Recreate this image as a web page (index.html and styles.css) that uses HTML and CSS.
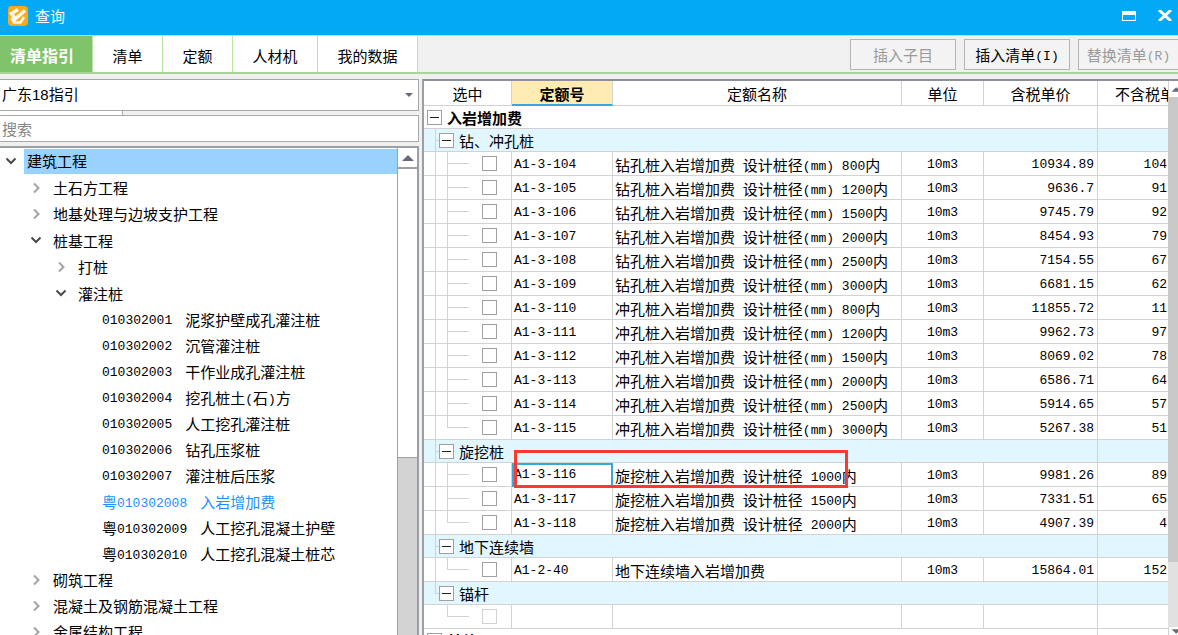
FILE: index.html
```
<!DOCTYPE html>
<html lang="zh-CN">
<head>
<meta charset="utf-8">
<title>查询</title>
<link rel="stylesheet" href="styles.css">
</head>
<body>
<header class="titlebar">
  <svg class="logo" viewBox="0 0 20 20" aria-hidden="true">
    <rect x="0" y="0" width="20" height="20" rx="4" fill="#f9a91c"/>
    <path d="M10 3.500L3.500 7.500L7 13L17 4.500" fill="none" stroke="#fff8ea" stroke-width="3.500"/>
    <path d="M3.500 12L6 16.500H12.500L16 11" fill="none" stroke="#fff8ea" stroke-width="2.500"/>
  </svg>
  <h1 class="title">查询</h1>
  <button class="winbtn" aria-label="最大化"><svg width="14" height="10" viewBox="0 0 14 10"><path d="M0 0H14V10H0Z M1 4V9H13V4Z" fill="#fff" fill-rule="evenodd"/></svg></button>
  <button class="winbtn" aria-label="关闭"><svg width="14" height="11" viewBox="0 0 14 11"><path d="M1 0L13 11M13 0L1 11" stroke="#fff" stroke-width="3"/></svg></button>
</header>

<nav class="toolbar">
  <button class="tab tab-active">清单指引</button>
  <button class="tab">清单</button>
  <button class="tab">定额</button>
  <button class="tab tab-mid">人材机</button>
  <button class="tab tab-wide">我的数据</button>
  <div class="actions">
    <button class="action" disabled>插入子目</button>
    <button class="action">插入清单<span class="m">(I)</span></button>
    <button class="action" disabled>替换清单<span class="m">(R)</span></button>
  </div>
</nav>

<main class="content">
  <section class="sidebar">
    <div class="combo">
      <select class="guide" aria-label="指引"><option>广东18指引</option></select>
      <svg class="combo-arrow" width="8" height="4" viewBox="0 0 8 4"><path d="M0 0H8L4 4Z" fill="#666a7a"/></svg>
    </div>
    <div class="strip"></div>
    <input class="search" type="text" placeholder="搜索" aria-label="搜索">
    <div class="treebox">
      <ul class="tree">
        <li class="node open selected"><svg class="chev" viewBox="0 0 12 12"><path d="M1.500 2.500L6 7L10.500 2.500"/></svg><span class="label">建筑工程</span></li>
        <li class="node l1"><svg class="chev shut" viewBox="0 0 12 12"><path d="M4 1.500L8.500 6L4 10.500"/></svg><span class="label">土石方工程</span></li>
        <li class="node l1"><svg class="chev shut" viewBox="0 0 12 12"><path d="M4 1.500L8.500 6L4 10.500"/></svg><span class="label">地基处理与边坡支护工程</span></li>
        <li class="node l1 open"><svg class="chev" viewBox="0 0 12 12"><path d="M1.500 2.500L6 7L10.500 2.500"/></svg><span class="label">桩基工程</span></li>
        <li class="node l2"><svg class="chev shut" viewBox="0 0 12 12"><path d="M4 1.500L8.500 6L4 10.500"/></svg><span class="label">打桩</span></li>
        <li class="node l2 open"><svg class="chev" viewBox="0 0 12 12"><path d="M1.500 2.500L6 7L10.500 2.500"/></svg><span class="label">灌注桩</span></li>
        <li class="node leaf"><span class="m">010302001</span><span>泥浆护壁成孔灌注桩</span></li>
        <li class="node leaf"><span class="m">010302002</span><span>沉管灌注桩</span></li>
        <li class="node leaf"><span class="m">010302003</span><span>干作业成孔灌注桩</span></li>
        <li class="node leaf"><span class="m">010302004</span><span>挖孔桩土<span class="m">(</span>石<span class="m">)</span>方</span></li>
        <li class="node leaf"><span class="m">010302005</span><span>人工挖孔灌注桩</span></li>
        <li class="node leaf"><span class="m">010302006</span><span>钻孔压浆桩</span></li>
        <li class="node leaf"><span class="m">010302007</span><span>灌注桩后压浆</span></li>
        <li class="node leaf current"><span>粤<span class="m">010302008</span></span><span>入岩增加费</span></li>
        <li class="node leaf"><span>粤<span class="m">010302009</span></span><span>人工挖孔混凝土护壁</span></li>
        <li class="node leaf"><span>粤<span class="m">010302010</span></span><span>人工挖孔混凝土桩芯</span></li>
        <li class="node l1"><svg class="chev shut" viewBox="0 0 12 12"><path d="M4 1.500L8.500 6L4 10.500"/></svg><span class="label">砌筑工程</span></li>
        <li class="node l1"><svg class="chev shut" viewBox="0 0 12 12"><path d="M4 1.500L8.500 6L4 10.500"/></svg><span class="label">混凝土及钢筋混凝土工程</span></li>
        <li class="node l1"><svg class="chev shut" viewBox="0 0 12 12"><path d="M4 1.500L8.500 6L4 10.500"/></svg><span class="label">金属结构工程</span></li>
      </ul>
      <div class="scroll">
        <div class="scroll-up"><svg width="12" height="6" viewBox="0 0 12 6"><path d="M6 0L12 6H0Z" fill="#666a7a"/></svg></div>
        <div class="scroll-thumb"></div>
        <div class="scroll-track"></div>
      </div>
    </div>
  </section>

  <section class="gridbox">
    <div class="gridview">
      <table class="grid">
        <colgroup><col class="c-pick"><col class="c-code"><col class="c-name"><col class="c-unit"><col class="c-price"><col class="c-net"></colgroup>
        <thead>
          <tr><th>选中</th><th class="sorted">定额号</th><th>定额名称</th><th>单位</th><th>含税单价</th><th class="net-head">不含税单价</th></tr>
        </thead>
        <tbody>
          <tr class="root"><td colspan="5"><div class="group"><button class="fold" aria-label="折叠"></button><span>入岩增加费</span></div></td><td></td></tr>
          <tr class="sub"><td colspan="5"><div class="group"><button class="fold" aria-label="折叠"></button><span>钻、冲孔桩</span></div></td><td></td></tr>
          <tr><td class="pick"><input type="checkbox" aria-label="A1-3-104"></td><td class="code">A1-3-104</td><td class="name">钻孔桩入岩增加费<span class="m"> </span>设计桩径<span class="m">(mm) 800</span>内</td><td class="unit">10m3</td><td class="num">10934.89</td><td class="num net">104</td></tr>
          <tr><td class="pick"><input type="checkbox" aria-label="A1-3-105"></td><td class="code">A1-3-105</td><td class="name">钻孔桩入岩增加费<span class="m"> </span>设计桩径<span class="m">(mm) 1200</span>内</td><td class="unit">10m3</td><td class="num">9636.7</td><td class="num net">91</td></tr>
          <tr><td class="pick"><input type="checkbox" aria-label="A1-3-106"></td><td class="code">A1-3-106</td><td class="name">钻孔桩入岩增加费<span class="m"> </span>设计桩径<span class="m">(mm) 1500</span>内</td><td class="unit">10m3</td><td class="num">9745.79</td><td class="num net">92</td></tr>
          <tr><td class="pick"><input type="checkbox" aria-label="A1-3-107"></td><td class="code">A1-3-107</td><td class="name">钻孔桩入岩增加费<span class="m"> </span>设计桩径<span class="m">(mm) 2000</span>内</td><td class="unit">10m3</td><td class="num">8454.93</td><td class="num net">79</td></tr>
          <tr><td class="pick"><input type="checkbox" aria-label="A1-3-108"></td><td class="code">A1-3-108</td><td class="name">钻孔桩入岩增加费<span class="m"> </span>设计桩径<span class="m">(mm) 2500</span>内</td><td class="unit">10m3</td><td class="num">7154.55</td><td class="num net">67</td></tr>
          <tr><td class="pick"><input type="checkbox" aria-label="A1-3-109"></td><td class="code">A1-3-109</td><td class="name">钻孔桩入岩增加费<span class="m"> </span>设计桩径<span class="m">(mm) 3000</span>内</td><td class="unit">10m3</td><td class="num">6681.15</td><td class="num net">62</td></tr>
          <tr><td class="pick"><input type="checkbox" aria-label="A1-3-110"></td><td class="code">A1-3-110</td><td class="name">冲孔桩入岩增加费<span class="m"> </span>设计桩径<span class="m">(mm) 800</span>内</td><td class="unit">10m3</td><td class="num">11855.72</td><td class="num net">11</td></tr>
          <tr><td class="pick"><input type="checkbox" aria-label="A1-3-111"></td><td class="code">A1-3-111</td><td class="name">冲孔桩入岩增加费<span class="m"> </span>设计桩径<span class="m">(mm) 1200</span>内</td><td class="unit">10m3</td><td class="num">9962.73</td><td class="num net">97</td></tr>
          <tr><td class="pick"><input type="checkbox" aria-label="A1-3-112"></td><td class="code">A1-3-112</td><td class="name">冲孔桩入岩增加费<span class="m"> </span>设计桩径<span class="m">(mm) 1500</span>内</td><td class="unit">10m3</td><td class="num">8069.02</td><td class="num net">78</td></tr>
          <tr><td class="pick"><input type="checkbox" aria-label="A1-3-113"></td><td class="code">A1-3-113</td><td class="name">冲孔桩入岩增加费<span class="m"> </span>设计桩径<span class="m">(mm) 2000</span>内</td><td class="unit">10m3</td><td class="num">6586.71</td><td class="num net">64</td></tr>
          <tr><td class="pick"><input type="checkbox" aria-label="A1-3-114"></td><td class="code">A1-3-114</td><td class="name">冲孔桩入岩增加费<span class="m"> </span>设计桩径<span class="m">(mm) 2500</span>内</td><td class="unit">10m3</td><td class="num">5914.65</td><td class="num net">57</td></tr>
          <tr><td class="pick last"><input type="checkbox" aria-label="A1-3-115"></td><td class="code">A1-3-115</td><td class="name">冲孔桩入岩增加费<span class="m"> </span>设计桩径<span class="m">(mm) 3000</span>内</td><td class="unit">10m3</td><td class="num">5267.38</td><td class="num net">51</td></tr>
          <tr class="sub"><td colspan="5"><div class="group"><button class="fold" aria-label="折叠"></button><span>旋挖桩</span></div></td><td></td></tr>
          <tr><td class="pick"><input type="checkbox" aria-label="A1-3-116"></td><td class="code focused">A1-3-116<div class="marker"></div></td><td class="name">旋挖桩入岩增加费<span class="m"> </span>设计桩径<span class="m"> 1000</span>内</td><td class="unit">10m3</td><td class="num">9981.26</td><td class="num net">89</td></tr>
          <tr><td class="pick"><input type="checkbox" aria-label="A1-3-117"></td><td class="code">A1-3-117</td><td class="name">旋挖桩入岩增加费<span class="m"> </span>设计桩径<span class="m"> 1500</span>内</td><td class="unit">10m3</td><td class="num">7331.51</td><td class="num net">65</td></tr>
          <tr><td class="pick last"><input type="checkbox" aria-label="A1-3-118"></td><td class="code">A1-3-118</td><td class="name">旋挖桩入岩增加费<span class="m"> </span>设计桩径<span class="m"> 2000</span>内</td><td class="unit">10m3</td><td class="num">4907.39</td><td class="num net">4</td></tr>
          <tr class="sub"><td colspan="5"><div class="group"><button class="fold" aria-label="折叠"></button><span>地下连续墙</span></div></td><td></td></tr>
          <tr><td class="pick last"><input type="checkbox" aria-label="A1-2-40"></td><td class="code">A1-2-40</td><td class="name">地下连续墙入岩增加费</td><td class="unit">10m3</td><td class="num">15864.01</td><td class="num net">152</td></tr>
          <tr class="sub sub-last"><td colspan="5"><div class="group"><button class="fold" aria-label="折叠"></button><span>锚杆</span></div></td><td></td></tr>
          <tr><td class="pick end"><input type="checkbox" disabled aria-label="未选"></td><td></td><td></td><td></td><td></td><td></td></tr>
          <tr class="root"><td colspan="5"><div class="group"><button class="fold" aria-label="折叠"></button><span>其他</span></div></td><td></td></tr>
        </tbody>
      </table>
    </div>
    <div class="vbar">
      <div class="vbar-btn"><svg width="10" height="6" viewBox="0 0 10 6"><path d="M3 6L8 1L10 3V6Z" fill="#666a7a"/></svg></div>
      <div class="vbar-thumb"></div>
      <div class="vbar-track"></div>
      <div class="vbar-btn vbar-down"><svg width="10" height="6" viewBox="0 0 10 6"><path d="M3 1H10V4L8 6Z" fill="#666a7a"/></svg></div>
    </div>
  </section>
</main>
</body>
</html>
```
FILE: styles.css
```
* { box-sizing: border-box; }

body {
  margin: 0;
  height: 100vh;
  display: flex;
  flex-direction: column;
  overflow: hidden;
  background: #f0f0f0;
  color: #000;
  font: 15px/20px "Noto Sans CJK SC", sans-serif;
}

button, input, select { font: inherit; color: inherit; }

.m { font-family: "Liberation Mono", monospace; font-size: 13px; line-height: 1; vertical-align: 1px; white-space: pre; }

.titlebar {
  flex: none;
  display: flex;
  align-items: center;
  height: 35px;
  padding: 0 6px 4px 8px;
  background: #03a9f4;
  color: #fff;
}
.logo { width: 20px; height: 20px; }
.title { flex: 1; margin: 0 0 0 7px; font-size: 15px; font-weight: 400; }
.winbtn { display: flex; margin-left: 22px; padding: 0; border: 0; background: none; }

.toolbar {
  flex: none;
  display: flex;
  height: 39px;
  border-top: 1px solid #b9e3b0;
  border-bottom: 2px solid #a9d49a;
}
.tab {
  flex: none;
  width: 70px;
  padding: 4px 0 0;
  border: 0;
  border-right: 1px solid #b4e8a4;
  background: #fff;
}
.tab-mid { width: 85px; }
.tab-wide { width: 100px; }
.tab-active {
  width: 93px;
  padding: 2px 8px 0 0;
  background: #7fc36a;
  color: #fff;
  font-size: 16px;
  font-weight: 700;
}
.actions { flex: 1; display: flex; justify-content: flex-end; gap: 8px; padding-top: 3px; }
.action {
  width: 106px;
  height: 31px;
  padding: 0;
  border: 1px solid #b4b4b4;
  background: #f3f3f3;
  white-space: nowrap;
}
.action:disabled { color: #9a9a9a; }
.action:last-child { width: 100px; border-right: 0; }

.content { flex: 1; display: flex; min-height: 0; gap: 3px; }

.sidebar { flex: none; width: 419px; display: flex; flex-direction: column; padding-top: 5px; }
.combo { flex: none; display: grid; align-items: center; height: 32px; border: 1px solid #a8a8a8; border-left: 0; background: #fff; }
.guide { grid-area: 1 / 1; width: 100%; height: 30px; padding: 0 2px; border: 0; appearance: none; background: none; font-family: "Liberation Sans", "Noto Sans CJK SC", sans-serif; }
.combo-arrow { grid-area: 1 / 1; justify-self: end; margin-right: 5px; }
.strip { flex: none; width: 123px; height: 4px; border-right: 1px solid #a8a8a8; background: #fff; }
.search { flex: none; width: 100%; height: 27px; padding: 0 2px; border: 1px solid #a8a8a8; border-left: 0; border-radius: 0; background: #fff; }
.search::placeholder { color: #858585; opacity: 1; }

.treebox { flex: 1; min-height: 0; display: flex; margin-top: 4px; border-top: 2px solid #9b9fa6; border-right: 2px solid #9b9fa6; background: #fff; overflow: hidden; }
.tree { flex: 1; margin: 0; padding: 0; list-style: none; overflow: hidden; }
.node { display: flex; align-items: center; height: 26px; padding-left: 5px; white-space: nowrap; }
.open { height: 27px; }
.l1 { padding-left: 30px; }
.l2 { padding-left: 55px; }
.leaf { padding-left: 102px; gap: 13px; }
.current { color: #1e90ff; }
.chev { flex: none; width: 12px; height: 12px; margin-right: 7px; fill: none; stroke: #4a4a4a; stroke-width: 2; }
.shut { stroke: #a3a3a3; margin-right: 11px; }
.l1.open .chev, .l2.open .chev { margin-right: 11px; }
.selected .label { flex: 1; height: 25px; padding: 2px 3px; background: #99d1ff; }

.scroll { flex: none; width: 20px; display: flex; flex-direction: column; border-left: 1px solid #a0a0a0; }
.scroll-up { flex: none; height: 21px; display: flex; align-items: center; justify-content: center; border-bottom: 2px solid #a0a0a0; }
.scroll-thumb { flex: 289; border-bottom: 1px solid #a0a0a0; }
.scroll-track { flex: 178; background: #d3d3d3; }

.gridbox { flex: 1; min-width: 0; display: flex; margin-top: 5px; border-top: 2px solid #8c9099; border-left: 2px solid #9b9fa6; background: #fff; overflow: hidden; }
.gridview { flex: 1; min-width: 0; overflow: hidden; }
.grid { width: 100%; table-layout: fixed; border-collapse: separate; border-spacing: 0; }
.c-pick { width: 88px; }
.c-code { width: 101px; }
.c-unit { width: 82px; }
.c-price { width: 114px; }
.c-net { width: 70px; }
.grid th, .grid td { height: 24px; padding: 2px 0 0; border-right: 1px solid #d2d2d2; border-bottom: 1px solid #d2d2d2; white-space: nowrap; line-height: 20px; }
.grid tr > :last-child { border-right: 0; }
.grid th { height: 25px; font-weight: 400; }
.grid .sorted { background: #ffecb3; border-bottom: 2px solid #36a9d8; font-weight: 700; }
.grid .net-head { padding-left: 17px; text-align: left; overflow: hidden; text-overflow: clip; }
.grid .sub td, .grid .root td { height: 23px; padding: 0; }
.grid .sub td { background-color: #e1f6ff; }

.group { display: flex; align-items: center; gap: 5px; height: 22px; padding-left: 3px; }
.group span { padding-top: 2px; }
.root .group { font-weight: 700; }
.sub .group {
  padding-left: 15px;
  background: linear-gradient(#d2d2d2, #d2d2d2) 11px 0 / 1px 100% no-repeat, linear-gradient(#d2d2d2, #d2d2d2) 11px 11px / 4px 1px no-repeat;
}
.sub-last .group { background-size: 1px 11px, 4px 1px; }
.fold { flex: none; width: 15px; height: 15px; padding: 0; border: 1px solid #a0a0a0; background: linear-gradient(#222, #222) center / 9px 1px no-repeat #fff; }

.grid .pick {
  padding: 0 14px 0 0;
  text-align: right;
  background: linear-gradient(#d2d2d2, #d2d2d2) 11px 0 / 1px 100% no-repeat, linear-gradient(#d2d2d2, #d2d2d2) 23px 0 / 1px 100% no-repeat, linear-gradient(#d2d2d2, #d2d2d2) 23px 11px / 22px 1px no-repeat;
}
.grid .last { background-size: 1px 100%, 1px 11px, 22px 1px; }
.grid .end { background-size: 0 0, 1px 11px, 22px 1px; }
.pick input { display: block; width: 15px; height: 15px; margin: 0 0 0 auto; appearance: none; border: 1px solid #a0a0a0; background: #fff; }
.pick input:disabled { border-color: #d2d2d2; }

.grid .code, .grid .unit, .grid .num { padding-top: 3px; font-family: "Liberation Mono", monospace; font-size: 13px; }
.grid .code { padding-left: 2px; }
.grid .name { padding-left: 2px; }
.grid .unit { text-align: center; }
.grid .num { padding-right: 3px; text-align: right; }
.grid .net { padding-right: 1px; }
.grid .focused { position: relative; padding: 0; border: 2px solid #36a9d8; }
.marker { position: absolute; z-index: 1; top: -15px; left: 0; width: 334px; height: 38px; border: 3px solid #fb3838; pointer-events: none; }

.vbar { flex: none; width: 10px; display: flex; flex-direction: column; background: #e1e1e1; }
.vbar-btn { flex: none; height: 16px; display: flex; align-items: center; background: #fff; border-left: 1px solid #d2d2d2; }
.vbar-thumb { flex: 465; background: #c9c9c9; }
.vbar-track { flex: 65; }
.vbar-down { height: 8px; }
```
